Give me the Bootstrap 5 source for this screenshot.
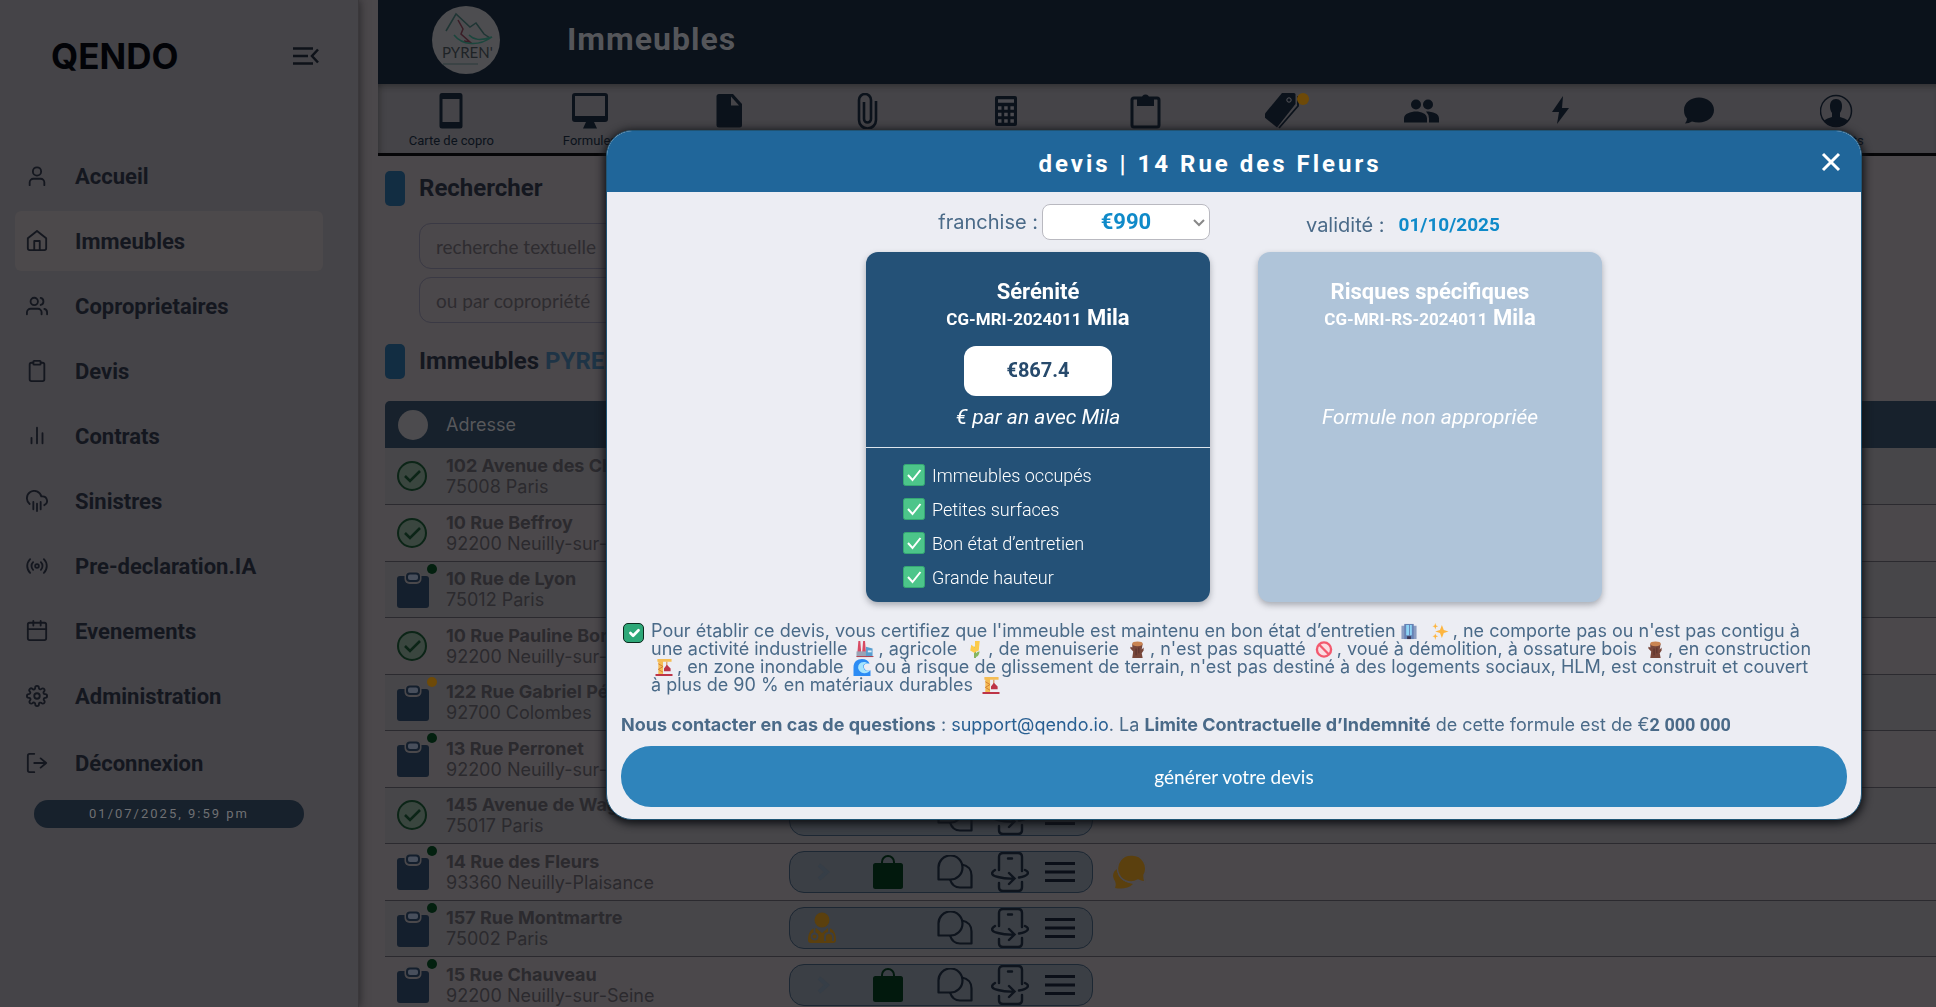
<!DOCTYPE html>
<html lang="fr">
<head>
<meta charset="utf-8">
<meta name="viewport" content="width=device-width, initial-scale=1">
<title>Qendo - Immeubles</title>
<link href="https://cdn.jsdelivr.net/npm/bootstrap@5.3.0/dist/css/bootstrap.min.css" rel="stylesheet">
<style>
:root { --ink:#14171f; --navy:#0b121b; --steel:#17212c; --dim:#4b484b; --geo:Inter,"Open Sans",sans-serif; --rob:Roboto,"Liberation Sans",sans-serif; }
html, body { height:100%; overflow:hidden; }
body { background:var(--dim); color:var(--ink); font-family:var(--rob); }
svg { display:block; flex:none; }

/* sidebar */
.side { width:359px; background:#454448; box-shadow:1px 0 8px rgba(20,20,24,.6); border-right:1px solid #3a383b; padding:0 35px 0 15px; z-index:1; }
.brand { height:112px; padding:0 0 0 36px; }
.brand-name { font:700 35px/40px var(--geo); color:#020307; text-decoration:none; }
.side-nav { margin-top:34px; gap:5px; }
.side-nav .nav-link { height:60px; border-radius:6px; padding:0 12px 0 11px; gap:27px; font-size:22px; font-weight:700; color:var(--ink); }
.side-nav .nav-link.active { background:#4c494b; }
.side-nav .last-link { margin-top:2px; }
.ln { fill:none; stroke:currentColor; stroke-width:2; stroke-linecap:round; stroke-linejoin:round; }
.stamp { margin:7px 19px 0 19px; height:28px; border-radius:14px; background:var(--steel); color:#6f7073; font-size:13px; letter-spacing:2px; }

/* top bars */
.main-col { padding-left:19px; min-width:0; }
.topbar { height:84px; background:var(--navy); padding-left:54px; gap:67px; }
.topbar h1 { font-size:32px; font-weight:700; letter-spacing:1px; line-height:40px; color:#55565a; margin:0 0 6px; }
.topbar svg { margin-bottom:5px; }
.tools { height:72px; border-bottom:3px solid #050507; background:#454448; padding:9px 29px 0 4px; box-shadow:inset 0 6px 6px -4px rgba(20,20,20,.4), inset 6px 0 6px -4px rgba(20,20,20,.3); }
.tools button { background:none; border:0; padding:0; flex:1 1 0; color:var(--navy); font-size:13px; line-height:16px; gap:4px; position:relative; }
.tools .dot { position:absolute; left:calc(50% + 14px); top:0; width:12px; height:12px; border-radius:50%; background:#6e4a08; }

/* content */
.content { padding:15px 0 0 7px; }
.head-line { height:35px; gap:14px; }
.head-line::before { content:""; width:20px; height:35px; border-radius:5px; background:#122d42; }
.head-line h2 { font-size:24px; font-weight:700; line-height:35px; margin:0; }
.head-line span { color:#1e3446; }
.search { padding:17px 0 0 34px; gap:8px; margin-bottom:21px; }
.search .form-control { height:46px; width:600px; border-radius:12px; background:transparent; border:1px solid #3a3944; padding:0 16px; font:400 19px/24px Lato,"Open Sans",sans-serif; color:#2d2c30; }
.search .form-control::placeholder { color:#2e2c30; opacity:1; }
.grid-table { margin:22px 0 0; table-layout:fixed; width:100%; font-family:var(--geo); color:#2b2a2e; }
.grid-table th { height:47px; background:var(--steel); color:#57585b; font-weight:400; font-size:18px; padding:0; vertical-align:middle; }
.grid-table th:first-child { border-radius:5px 0 0 0; }
.grid-table td { height:56px; padding:0; border-bottom:1px solid #2b2a2f; vertical-align:middle; line-height:21px; font-size:18px; white-space:nowrap; }
.grid-table tbody tr:nth-child(even) td { height:57px; }
.grid-table tbody tr:nth-child(odd) td { background:#474649; }
.grid-table b { font-weight:700; display:block; }
.pick { width:30px; height:30px; border-radius:50%; background:#4c4b4e; margin-left:13px; }
.mk { margin-left:12px; position:relative; width:32px; }
.mk i { position:absolute; left:30px; top:-7px; width:10px; height:10px; border-radius:50%; background:#03200f; }
.mk i.wait { background:#6e4a08; }
.acts { gap:20px; }
.pillbar { width:304px; height:42px; border:1px solid #1c2733; border-radius:15px; background:#3b3f45; padding:0 15px 0 17px; }
.pillbar svg:nth-child(1) { margin-right:36px; }
.pillbar svg:nth-child(2) { margin-right:34px; }
.pillbar svg:nth-child(3) { margin-right:18px; }
.pillbar svg:nth-child(4) { margin-right:16px; }

/* quote dialog */
.quote-wrap { padding:130px 74px 0 606px; overflow:hidden; }
.quote { max-width:none; margin:0; pointer-events:auto; }
.quote .modal-content { border:1px solid #1f5475; border-radius:26px; background:#ecedf3; overflow:hidden; box-shadow:0 2px 8px 2px #101216; font-family:var(--geo); color:#4a6a88; }
.quote .modal-header { height:61px; padding:0; border:0; border-radius:0; background:#20669a; color:#fff; }
.quote .modal-title { font:700 24px/28px var(--rob); letter-spacing:3px; padding-top:5px; }
.x-btn { width:48px; height:61px; background:none; border:0; color:#fff; padding:0 12px 0 0; }
.quote .modal-body { padding:12px 14px; }
.pair { display:grid; grid-template-columns:344px 344px; justify-content:center; column-gap:48px; }
.pair label, .valid { font-size:20px; }
.pair .form-select { width:168px; height:36px; border:1px solid #b9b9c0; border-radius:8px; padding:0 30px; text-align:center; text-align-last:center; font:700 22px/32px var(--rob); color:#0f8ac9; background-color:#fff; background-position:right 4px center; background-size:12px; background-image:url("data:image/svg+xml,%3csvg xmlns='http://www.w3.org/2000/svg' viewBox='0 0 12 12'%3e%3cpath fill='none' stroke='%23888' stroke-width='2' d='m1 4 5 5 5-5'/%3e%3c/svg%3e"); }
.valid { padding:6px 0 0 48px; gap:14px; }
.valid time { font:700 19px/28px var(--rob); color:#0f8ac9; }
.offer { min-height:350px; border:0; border-radius:12px; background:#245177; color:#fff; font-family:var(--rob); text-align:center; box-shadow:0 3px 6px rgba(40,50,60,.35); }
.offer.off { background:#afc4d9; }
.offer-top { height:196px; padding-top:27px; border-bottom:1px solid #dce4ec; }
.off .offer-top { border-color:transparent; }
.offer h3 { font-size:22px; font-weight:700; line-height:26px; margin:0; }
.offer h3 small { font-size:17px; font-weight:inherit; }
.price { width:148px; height:50px; margin:14px auto 8px; border-radius:12px; background:#fff; color:#274a6c; font-size:20px; font-weight:700; line-height:48px; }
.off .price { visibility:hidden; }
.offer em { font-size:21px; line-height:26px; }
.offer ul { padding:10px 0 0 37px; margin:0; list-style:none; text-align:left; font-size:18px; font-weight:300; }
.offer li { height:34px; gap:7px; }
.cert { margin-top:20px; gap:7px; }
.cert .form-check-input { width:21px; height:20px; margin:1px 0 0 2px; border:1px solid #0b2a1d; border-radius:5px; flex:none; }
.cert .form-check-input:checked { background-color:#2ea878; }
.cert label { font-size:18px; line-height:18px; white-space:nowrap; }
.cert svg { display:inline-block; width:18px; height:17px; vertical-align:-3px; margin:0 4px; }
.contact { margin:17px 0 8px; font-size:18px; line-height:27px; white-space:nowrap; }
.contact a { color:#285f92; text-decoration:none; }
.contact strong { font-weight:700; }
.contact .sum { font-family:var(--rob); font-weight:700; }
.go { height:61px; border-radius:30px; border:0; background:#2f84bb; color:#fff; font:400 19px/24px Lato,"Open Sans",sans-serif; }
</style>
<script src="https://cdn.jsdelivr.net/npm/bootstrap@5.3.0/dist/js/bootstrap.bundle.min.js"></script>
</head>
<body>
<svg width="0" height="0" class="position-absolute">
<defs>
<symbol id="ok" viewBox="0 0 30 30"><circle cx="15" cy="15" r="14" fill="#3a463f" stroke="#0c2517" stroke-width="2"/><path d="m8 15 5 5 10-10" fill="none" stroke="#0c2517" stroke-width="2.6"/></symbol>
<symbol id="clip" viewBox="0 0 32 37"><rect y="5" width="32" height="32" rx="3" fill="#141f2d"/><rect x="7.500" y="0" width="17" height="13" rx="5" fill="#4a484b"/><rect x="10" y="2.500" width="12" height="7.500" rx="3" fill="#484f5c" stroke="#141f2d" stroke-width="2"/></symbol>
<symbol id="bag" viewBox="0 0 30 34"><rect y="8" width="30" height="26" rx="2.500" fill="#02190d"/><path d="M9 14V7a6 6 0 0 1 12 0v7" fill="none" stroke="#02190d" stroke-width="2"/></symbol>
<symbol id="talk" viewBox="0 0 36 34"><g fill="none" stroke="#0e141d" stroke-width="2.200" stroke-linejoin="round"><path d="M1.500 24.500V13A12 12 0 1 1 13 24.500z"/><path d="M25 9.500c6 1 9.500 5.500 9.500 11v12H23c-5 0-8.500-3.500-10-8"/></g></symbol>
<symbol id="spin" viewBox="0 0 38 40"><g fill="none" stroke="#0e141d" stroke-width="2.400" stroke-linecap="round"><path d="M8 18V5q0-4 4-4h15q4 0 4 4v14M8 31v4q0 4 4 4h15q4 0 4-4v-5M17 6.500h4"/><path d="M4 18c-5 3-3 6 3 7 6 1.500 10 2 16 1.500m-5-5.500 5.500 5.500L18 32M34 18c5 2 4 6-6 7.500"/></g></symbol>
<symbol id="bars" viewBox="0 0 30 20"><path d="M0 1.500h30M0 10h30M0 18.500h30" stroke="#0b0f18" stroke-width="3"/></symbol>
<symbol id="faint" viewBox="0 0 30 30"><path d="m12 8 8 7-8 7" fill="none" stroke="#363e47" stroke-width="4"/></symbol>
<symbol id="doc" viewBox="0 0 30 32"><g fill="#5b400e"><circle cx="15" cy="8" r="7.500"/><path d="M1 28c0-7 3-12 8-12l6 5 6-5c5 0 8 5 8 12 0 2-1 3-3 3H4c-2 0-3-1-3-3z"/></g><g fill="none" stroke="#3b3f45" stroke-width="1.800"><circle cx="7.500" cy="24.500" r="3"/><path d="M7.500 16v5M22 16v5m-4 8v-4q0-4 4-4t4 4v4"/></g></symbol>
<symbol id="yel" viewBox="0 0 34 34"><path d="M2 33c1-3 1-4 0-7-4-6-1-10 2-12 1 8 5 13 16 15-5 5-12 5-18 4z" fill="#5b400e"/><path d="M19 0a13.500 13.500 0 0 1 12 20c0 3 0 4 1 7-3 0-5-1-7-2A13.500 13.500 0 1 1 19 0z" fill="#5b400e" stroke="#4b484b" stroke-width="1.500"/></symbol>
<symbol id="tick" viewBox="0 0 22 22"><rect x=".5" y=".5" width="21" height="21" rx="2" fill="#4cc58a" stroke="#35a873"/><path d="m5 11 4.500 5L17.500 6" fill="none" stroke="#fff" stroke-width="2"/></symbol>
<symbol id="eb" viewBox="0 0 18 18"><path fill="#8b9cc0" d="M1 3h4v14H1zM13 3h4v14h-4z"/><path fill="#6682b5" d="M4 1h10v16H4z"/><path fill="#8dd3f5" d="M6 2h3v11H6zM10 2h2v11h-2z"/><path fill="#3b3554" d="M7 14h4v3H7z"/></symbol>
<symbol id="es" viewBox="0 0 18 18"><path fill="#fdb53f" d="m11 2 2 5.500L18 9l-5 1.500L11 16l-2-5.500L4 9l5-1.500zM4 0l.8 2.700L7 3.500l-2.200.8L4 7l-.8-2.700L1 3.500l2.200-.8zM4 11l.8 2.200 2.200.8-2.200.8L4 18l-.8-3.200L1 14l2.200-.8z"/></symbol>
<symbol id="ef" viewBox="0 0 18 18"><path fill="#d84a63" d="M2 0h2l1 12H1zM7 0h2l1 12H6z"/><path fill="#9aa3b5" d="M0 11h11v6H0z"/><path fill="#5a9fd0" d="M10 6l7 2v9h-7z"/><path fill="#b33b48" d="M0 16h18v1H0z"/><path fill="#dcecf8" d="M12 10h4v2h-4z"/></symbol>
<symbol id="ew" viewBox="0 0 18 18"><path stroke="#7eae5a" stroke-width="2" d="M9 18V6" fill="none"/><path fill="#fccb4a" d="M9 0h5l-1 10-4 2zM5 4l4 3v6L4 10z"/><path fill="#87b85e" d="M9 17c0-4 2-6 5-6-1 4-2 6-5 6z"/></symbol>
<symbol id="el" viewBox="0 0 18 18"><path fill="#77463a" d="M4 3h11l-1 6 2-2v3l-2 3 1 5H4l1-7-3-3V6l2 1z"/><ellipse cx="9.500" cy="3" rx="5.500" ry="2.500" fill="#c98452"/><path stroke="#56302b" d="M8 8v7M11 7v6"/></symbol>
<symbol id="en" viewBox="0 0 18 18"><circle cx="9" cy="9" r="7.500" fill="#fbdde2" stroke="#f3596e" stroke-width="2.500"/><path stroke="#f3596e" stroke-width="2.500" d="m4 4 10 10"/></symbol>
<symbol id="ec" viewBox="0 0 18 18"><path fill="#f5bd54" d="M2 0h15v3H8v13H3V3H2z"/><path stroke="#d27c33" d="m3 5 5 3-5 3 5 3M12 3v5" fill="none"/><path fill="#bd3447" d="m12 6 4 4v3H9v-3zM0 16h18v2H0z"/></symbol>
<symbol id="ev" viewBox="0 0 18 18"><path fill="#2d8cf4" d="M0 18V9C0 3 4 0 9 0c4 0 7 2 8 5-4-1-7 1-6 4 1 4 5 4 7 3v6z"/><path fill="#a5e4fd" d="M5 10c-1-6 6-9 11-5-5-1-7 2-5 5 1 3 5 3 7 2-4 5-11 4-13-2z"/></symbol>
</defs>
</svg>

<div class="d-flex vh-100">
  <aside class="side flex-shrink-0">
    <div class="brand d-flex align-items-center justify-content-between">
      <a href="#" class="brand-name">QENDO</a>
      <svg class="me-1" width="26" height="20" viewBox="0 0 26 20" fill="none" stroke="#0e1219" stroke-width="2.500"><path d="M0 2.500h20M0 10h15M0 17.500h20M25 3.500 19 10l6 6.500"/></svg>
    </div>
    <nav class="side-nav nav flex-column flex-nowrap">
      <a href="#" class="nav-link d-flex align-items-center"><svg class="ln" width="22" height="22" viewBox="0 0 24 24"><path d="M20 22v-3a4 4 0 0 0-4-4H8a4 4 0 0 0-4 4v3"/><circle cx="12" cy="7" r="4.500"/></svg>Accueil</a>
      <a href="#" class="nav-link active d-flex align-items-center"><svg class="ln" width="22" height="22" viewBox="0 0 24 24"><path d="m2 9 10-8 10 8v11a2 2 0 0 1-2 2H4a2 2 0 0 1-2-2z"/><path d="M9 22V12h6v10"/></svg>Immeubles</a>
      <a href="#" class="nav-link d-flex align-items-center"><svg class="ln" width="22" height="22" viewBox="0 0 24 24"><path d="M17 21v-2a4 4 0 0 0-4-4H5a4 4 0 0 0-4 4v2M23 21v-2a4 4 0 0 0-3-3.870M16 3.130a4 4 0 0 1 0 7.750"/><circle cx="9" cy="7" r="4"/></svg>Coproprietaires</a>
      <a href="#" class="nav-link d-flex align-items-center"><svg class="ln" width="22" height="22" viewBox="0 0 24 24"><path d="M16 3h2a2 2 0 0 1 2 2v16a2 2 0 0 1-2 2H6a2 2 0 0 1-2-2V5a2 2 0 0 1 2-2h2"/><rect x="8" y="1" width="8" height="4" rx="1"/></svg>Devis</a>
      <a href="#" class="nav-link d-flex align-items-center"><svg class="ln" width="22" height="22" viewBox="0 0 24 24"><path d="M18 20V9M12 20V3M6 20v-6"/></svg>Contrats</a>
      <a href="#" class="nav-link d-flex align-items-center"><svg class="ln" width="22" height="22" viewBox="0 0 24 24"><path d="M16 13v8M8 13v8M12 15v8M20 16.580A5 5 0 0 0 18 7h-1.260A8 8 0 1 0 4 15.250"/></svg>Sinistres</a>
      <a href="#" class="nav-link d-flex align-items-center"><svg class="ln" width="22" height="22" viewBox="0 0 24 24"><circle cx="12" cy="12" r="2"/><path d="M16.240 7.760a6 6 0 0 1 0 8.490M7.760 16.240a6 6 0 0 1 0-8.490M19.500 4.500a10.500 10.500 0 0 1 0 15M4.500 19.500a10.500 10.500 0 0 1 0-15"/></svg>Pre-declaration.IA</a>
      <a href="#" class="nav-link d-flex align-items-center"><svg class="ln" width="22" height="22" viewBox="0 0 24 24"><rect x="2" y="3" width="20" height="19" rx="2"/><path d="M16 1v5M8 1v5M2 10h20"/></svg>Evenements</a>
      <a href="#" class="nav-link d-flex align-items-center"><svg class="ln" width="22" height="22" viewBox="0 0 24 24"><circle cx="12" cy="12" r="3"/><path d="M19.400 15a1.650 1.650 0 0 0 .33 1.820l.06.06a2 2 0 1 1-2.830 2.830l-.06-.06a1.650 1.650 0 0 0-2.800 1.170V21a2 2 0 1 1-4 0v-.09A1.650 1.650 0 0 0 7.180 19.730l-.06.06a2 2 0 1 1-2.830-2.830l.06-.06A1.650 1.650 0 0 0 3.090 14H3a2 2 0 1 1 0-4h.09A1.650 1.650 0 0 0 4.270 7.180l-.06-.06a2 2 0 1 1 2.830-2.830l.06.06A1.650 1.650 0 0 0 10 3.090V3a2 2 0 1 1 4 0v.09a1.650 1.650 0 0 0 2.820 1.180l.06-.06a2 2 0 1 1 2.830 2.830l-.06.06A1.650 1.650 0 0 0 20.910 10H21a2 2 0 1 1 0 4h-.09a1.650 1.650 0 0 0-1.510 1z"/></svg>Administration</a>
      <a href="#" class="nav-link last-link d-flex align-items-center"><svg class="ln" width="22" height="22" viewBox="0 0 24 24"><path d="M9 22H4a2 2 0 0 1-2-2V4a2 2 0 0 1 2-2h5M16 17l6-5-6-5M22 12H9"/></svg>Déconnexion</a>
    </nav>
    <div class="stamp d-flex align-items-center justify-content-center">01/07/2025, 9:59 pm</div>
  </aside>

  <main class="main-col flex-grow-1">
    <header class="topbar d-flex align-items-center">
      <svg width="68" height="68" viewBox="0 0 68 68"><circle cx="34" cy="34" r="34" fill="#4d4d50"/><path d="m14 25 10-17 14 13 6-4 8 11 6 4" fill="none" stroke="#1f3534" stroke-width="1.500"/><path d="m26 14 5 9-2 5 9 8-6-1" fill="none" stroke="#3a1d26" stroke-width="1.500"/><path d="M22 29c8 10 24 12 38 2-12 4-18 3-23-2" fill="none" stroke="#1b463d" stroke-width="1.500"/><text x="10" y="52" font-family="Lato,sans-serif" font-size="15" fill="#1e2326">PYREN'</text><path d="M11 58h35" stroke="#2a3a3a"/></svg>
      <h1>Immeubles</h1>
    </header>
    <div class="tools d-flex">
      <button type="button" class="d-flex flex-column align-items-center"><svg width="36" height="36" viewBox="0 0 36 36"><path fill="currentColor" fill-rule="evenodd" d="M9 0h18q2.500 0 2.500 3v30q0 2.500-2.500 2.500H9Q6.500 35.500 6.500 33V3Q6.500 0 9 0zm.5 6v23h17V6z"/></svg>Carte de copro</button>
      <button type="button" class="d-flex flex-column align-items-center"><svg width="36" height="36" viewBox="0 0 36 36"><path fill="currentColor" fill-rule="evenodd" d="M3 0h30q3 0 3 3v23q0 3-3 3H22l3 6.500H11L14 29H3q-3 0-3-3V3q0-3 3-3zm0 3v20h30V3z"/></svg>Formules</button>
      <button type="button" class="d-flex flex-column align-items-center" aria-label="Document"><svg width="36" height="36" viewBox="0 0 36 36"><path fill="currentColor" d="M8 1h14l9 10v21q0 2.500-2.500 2.500H8Q5.500 34.500 5.500 32V3.500Q5.500 1 8 1z"/><path fill="#454448" d="M20 3.500v9h8z"/></svg></button>
      <button type="button" class="d-flex flex-column align-items-center" aria-label="Pièce jointe"><svg width="36" height="36" viewBox="0 0 36 36" fill="none" stroke="currentColor" stroke-width="2.600"><path d="M27 8v19a8.500 8.500 0 0 1-17 0V7a6 6 0 0 1 12 0v19a3.500 3.500 0 0 1-7 0V9"/></svg></button>
      <button type="button" class="d-flex flex-column align-items-center" aria-label="Calcul"><svg width="36" height="36" viewBox="0 0 36 36"><rect x="7" y="3" width="22" height="30" rx="2" fill="currentColor"/><path stroke="#4b4b50" stroke-width="3.500" d="M10 8h16"/><path stroke="#4b4b50" stroke-width="3.500" stroke-dasharray="3.500 2.700" d="M10 15h16M10 21.500h16M10 28h16"/></svg></button>
      <button type="button" class="d-flex flex-column align-items-center" aria-label="Devis"><svg width="36" height="36" viewBox="0 0 36 36"><rect x="5" y="5" width="27" height="29" rx="2" fill="none" stroke="currentColor" stroke-width="3"/><path fill="currentColor" d="M10 5h5a3.500 3.500 0 0 1 7 0h5v8H10z"/></svg></button>
      <button type="button" class="d-flex flex-column align-items-center" aria-label="Étiquettes"><svg width="36" height="36" viewBox="0 0 36 36"><path fill="currentColor" d="M17 0h12q1.500 0 1.500 1.500V11L12 34.500-2 23z"/><path d="M33 3v10L14 35" fill="none" stroke="currentColor" stroke-width="1.800"/><circle cx="24" cy="7" r="2.200" fill="none" stroke="#55555a"/></svg><span class="dot"></span></button>
      <button type="button" class="d-flex flex-column align-items-center" aria-label="Copropriétaires"><svg width="36" height="36" viewBox="0 0 36 36" fill="currentColor"><circle cx="12" cy="11.500" r="5"/><circle cx="24" cy="11.500" r="5"/><path d="M0 29.500v-4c0-5 7-7 12-7s11 2 11 7v4zM22 18.500c7 0 13 2 13 7v4H25v-4q0-4-3-7z"/></svg></button>
      <button type="button" class="d-flex flex-column align-items-center" aria-label="Énergie"><svg width="36" height="36" viewBox="0 0 36 36" fill="currentColor"><path d="M21 3 10 19h7l-2 12 12-16h-7z"/></svg></button>
      <button type="button" class="d-flex flex-column align-items-center" aria-label="Messages"><svg width="36" height="36" viewBox="0 0 36 36" fill="currentColor"><path d="M18 4.500c8 0 15 5 15 12.500s-7 12.500-15 12.500q-4 0-7-1-3 2-7 2 2-2 2-5-3-3-3-8.500C3 9.500 10 4.500 18 4.500z"/></svg></button>
      <button type="button" class="d-flex flex-column align-items-center"><svg width="36" height="36" viewBox="0 0 36 36"><circle cx="16" cy="18" r="15.500" fill="none" stroke="currentColor" stroke-width="1.500"/><path fill="currentColor" d="M16 6c4 0 6 3 6 7s-1 5-2 7v4q5 1 8 3.500Q23 34 16 34T4 27.500Q7 25 12 24v-4c-1-2-2-3-2-7s2-7 6-7z"/></svg>Contacts</button>
    </div>
    <div class="content">
      <div class="head-line d-flex align-items-center"><h2>Rechercher</h2></div>
      <form class="search d-flex flex-column">
        <input type="text" class="form-control" placeholder="recherche textuelle" aria-label="recherche textuelle">
        <input type="text" class="form-control" placeholder="ou par copropriété" aria-label="ou par copropriété">
      </form>
      <div class="head-line d-flex align-items-center"><h2>Immeubles <span>PYREN'</span></h2></div>
      <table class="grid-table">
        <colgroup><col style="width:61px"><col style="width:343px"><col></colgroup>
        <thead><tr><th><div class="pick"></div></th><th>Adresse</th><th></th></tr></thead>
        <tbody>
        <tr><td><div class="mk"><svg width="30" height="30"><use href="#ok"/></svg></div></td><td><b>102 Avenue des Champs</b>75008 Paris</td><td></td></tr>
        <tr><td><div class="mk"><svg width="30" height="30"><use href="#ok"/></svg></div></td><td><b>10 Rue Beffroy</b>92200 Neuilly-sur-Seine</td><td></td></tr>
        <tr><td><div class="mk"><svg width="32" height="37"><use href="#clip"/></svg><i></i></div></td><td><b>10 Rue de Lyon</b>75012 Paris</td><td></td></tr>
        <tr><td><div class="mk"><svg width="30" height="30"><use href="#ok"/></svg></div></td><td><b>10 Rue Pauline Borghese</b>92200 Neuilly-sur-Seine</td><td></td></tr>
        <tr><td><div class="mk"><svg width="32" height="37"><use href="#clip"/></svg><i class="wait"></i></div></td><td><b>122 Rue Gabriel Péri</b>92700 Colombes</td><td></td></tr>
        <tr><td><div class="mk"><svg width="32" height="37"><use href="#clip"/></svg><i></i></div></td><td><b>13 Rue Perronet</b>92200 Neuilly-sur-Seine</td><td></td></tr>
        <tr><td><div class="mk"><svg width="30" height="30"><use href="#ok"/></svg></div></td><td><b>145 Avenue de Wagram</b>75017 Paris</td><td><div class="pillbar d-flex align-items-center"><svg width="30" height="32"></svg><svg width="30" height="34"></svg><svg width="36" height="34"><use href="#talk"/></svg><svg width="38" height="40"><use href="#spin"/></svg><svg width="30" height="20"><use href="#bars"/></svg></div></td></tr>
        <tr><td><div class="mk"><svg width="32" height="37"><use href="#clip"/></svg><i></i></div></td><td><b>14 Rue des Fleurs</b>93360 Neuilly-Plaisance</td><td><div class="acts d-flex align-items-center"><div class="pillbar d-flex align-items-center"><svg width="30" height="30"><use href="#faint"/></svg><svg width="30" height="34"><use href="#bag"/></svg><svg width="36" height="34"><use href="#talk"/></svg><svg width="38" height="40"><use href="#spin"/></svg><svg width="30" height="20"><use href="#bars"/></svg></div><svg width="34" height="34"><use href="#yel"/></svg></div></td></tr>
        <tr><td><div class="mk"><svg width="32" height="37"><use href="#clip"/></svg><i></i></div></td><td><b>157 Rue Montmartre</b>75002 Paris</td><td><div class="pillbar d-flex align-items-center"><svg width="30" height="32"><use href="#doc"/></svg><svg width="30" height="34"></svg><svg width="36" height="34"><use href="#talk"/></svg><svg width="38" height="40"><use href="#spin"/></svg><svg width="30" height="20"><use href="#bars"/></svg></div></td></tr>
        <tr><td><div class="mk"><svg width="32" height="37"><use href="#clip"/></svg><i></i></div></td><td><b>15 Rue Chauveau</b>92200 Neuilly-sur-Seine</td><td><div class="pillbar d-flex align-items-center"><svg width="30" height="30"><use href="#faint"/></svg><svg width="30" height="34"><use href="#bag"/></svg><svg width="36" height="34"><use href="#talk"/></svg><svg width="38" height="40"><use href="#spin"/></svg><svg width="30" height="20"><use href="#bars"/></svg></div></td></tr>
        </tbody>
      </table>
    </div>
  </main>
</div>

<div class="modal d-block quote-wrap" role="dialog" aria-labelledby="quoteTitle">
  <div class="modal-dialog quote">
    <div class="modal-content">
      <div class="modal-header d-flex">
        <h2 class="modal-title flex-grow-1 text-center" id="quoteTitle">devis | 14 Rue des Fleurs</h2>
        <button type="button" class="x-btn d-flex align-items-center justify-content-center" aria-label="Fermer"><svg width="20" height="20" viewBox="0 0 20 20" fill="none" stroke="currentColor" stroke-width="3"><path d="m2 2 16 16M18 2 2 18"/></svg></button>
      </div>
      <div class="modal-body">
        <div class="pair">
          <div class="d-flex align-items-center justify-content-end gap-1"><label for="fr">franchise :</label><select id="fr" class="form-select"><option>€990</option></select></div>
          <div class="valid d-flex align-items-center"><span>validité :</span><time datetime="2025-10-01">01/10/2025</time></div>
        </div>
        <div class="pair mt-2 pt-1">
          <section class="card offer">
            <div class="offer-top">
              <h3>Sérénité</h3>
              <h3><small>CG-MRI-2024011</small> Mila</h3>
              <div class="price">€867.4</div>
              <em>€ par an avec Mila</em>
            </div>
            <ul>
              <li class="d-flex align-items-center"><svg width="22" height="22"><use href="#tick"/></svg>Immeubles occupés</li>
              <li class="d-flex align-items-center"><svg width="22" height="22"><use href="#tick"/></svg>Petites surfaces</li>
              <li class="d-flex align-items-center"><svg width="22" height="22"><use href="#tick"/></svg>Bon état d’entretien</li>
              <li class="d-flex align-items-center"><svg width="22" height="22"><use href="#tick"/></svg>Grande hauteur</li>
            </ul>
          </section>
          <section class="card offer off">
            <div class="offer-top">
              <h3>Risques spécifiques</h3>
              <h3><small>CG-MRI-RS-2024011</small> Mila</h3>
              <div class="price"></div>
              <em>Formule non appropriée</em>
            </div>
          </section>
        </div>
        <div class="cert d-flex align-items-start">
          <input class="form-check-input" type="checkbox" id="cert" checked>
          <label for="cert">Pour établir ce devis, vous certifiez que l'immeuble est maintenu en bon état d’entretien<svg><use href="#eb"/></svg> <svg><use href="#es"/></svg>, ne comporte pas ou n'est pas contigu à<br>une activité industrielle <svg><use href="#ef"/></svg>, agricole <svg><use href="#ew"/></svg>, de menuiserie <svg><use href="#el"/></svg>, n'est pas squatté <svg><use href="#en"/></svg>, voué à démolition, à ossature bois <svg><use href="#el"/></svg>, en construction<br><svg><use href="#ec"/></svg>, en zone inondable <svg><use href="#ev"/></svg>ou à risque de glissement de terrain, n'est pas destiné à des logements sociaux, HLM, est construit et couvert<br>à plus de 90 % en matériaux durables <svg><use href="#ec"/></svg></label>
        </div>
        <p class="contact"><strong>Nous contacter en cas de questions</strong> : <a href="mailto:support@qendo.io">support@qendo.io</a>. La <strong>Limite Contractuelle d’Indemnité</strong> de cette formule est de €<span class="sum">2 000 000</span></p>
        <button type="button" class="go btn w-100">générer votre devis</button>
      </div>
    </div>
  </div>
</div>
</body>
</html>
